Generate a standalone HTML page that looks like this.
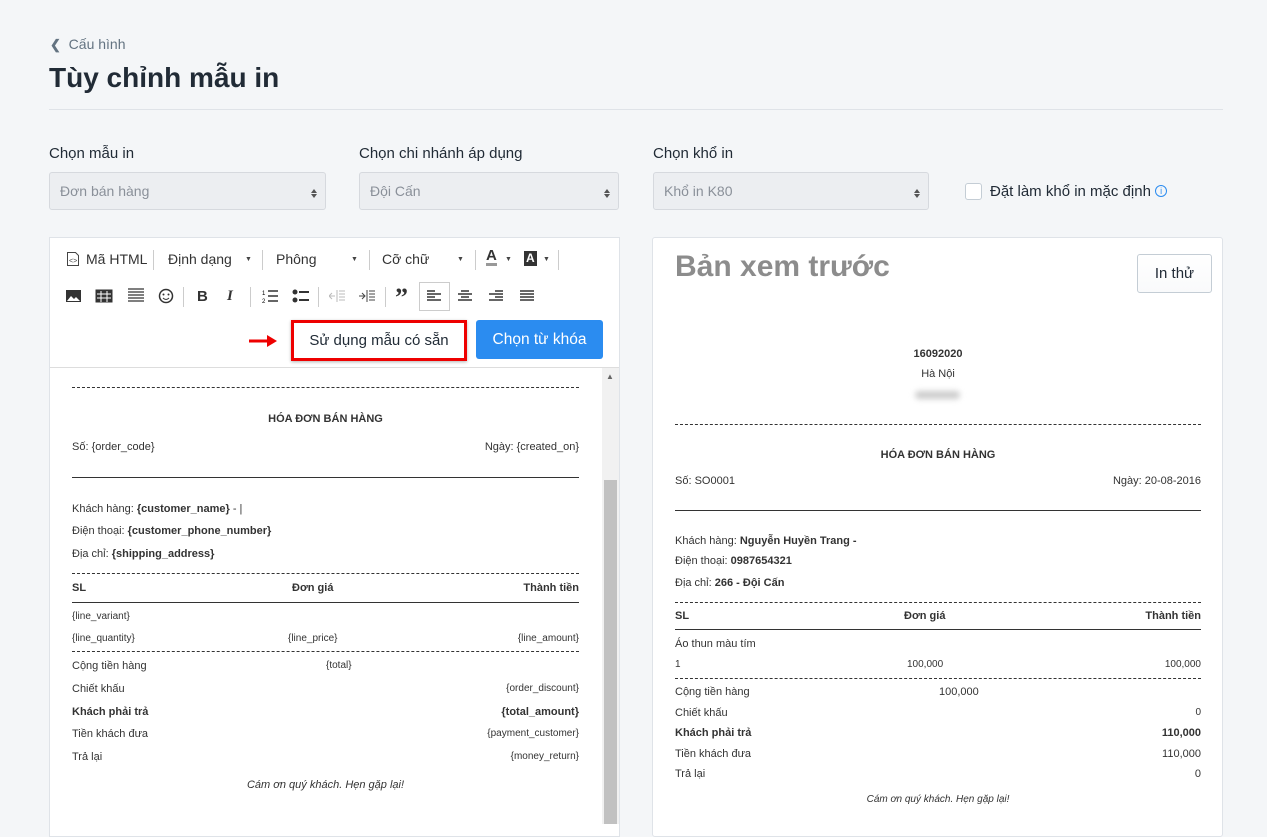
<!DOCTYPE html>
<html><head><meta charset="utf-8"><style>
*{box-sizing:border-box;margin:0;padding:0}
body{width:1267px;height:824px;overflow:hidden;background:#f4f6f8;font-family:"Liberation Sans",Arial,sans-serif;color:#212b36;position:relative}
.a{position:absolute;white-space:nowrap}
.lbl{font-size:15px;color:#212b36}
.sel{position:absolute;top:172px;height:38px;background:#eceef1;border:1px solid #d6d9de;border-radius:3px;font-size:14px;color:#8a9099;padding:10px 0 0 10px}
.sel:after{content:"";position:absolute;right:8px;top:13px;border:3.5px solid transparent;border-bottom:4px solid #555;}
.sel:before{content:"";position:absolute;right:8px;top:21px;border:3.5px solid transparent;border-top:4px solid #555;}
.panel{position:absolute;background:#fff;border:1px solid #dfe3e8}
.r{position:absolute;font-size:11px;color:#333;white-space:nowrap;line-height:14px;margin-top:1px}
.b{font-weight:bold}
.dash{position:absolute;height:0;border-top:1px dashed #333}
.sol{position:absolute;height:0;border-top:1px solid #333}
.tb{position:absolute;font-size:14px;color:#333}
.dd{position:absolute;top:256px;font-size:7px;color:#444}
.sep{position:absolute;width:1px;height:20px;background:#ccc}
.ic{position:absolute}
</style></head><body>
<div class="a" style="left:50px;top:36px;font-size:14px;color:#637381"><span style="font-size:13px;font-weight:bold">&#10094;</span>&nbsp; Cấu hình</div>
<div class="a" style="left:49px;top:62px;font-size:28px;font-weight:bold;color:#212b36">Tùy chỉnh mẫu in</div>
<div class="a" style="left:49px;top:109px;width:1174px;height:1px;background:#dfe3e8"></div>

<div class="a lbl" style="left:49px;top:145px">Chọn mẫu in</div>
<div class="a lbl" style="left:359px;top:145px">Chọn chi nhánh áp dụng</div>
<div class="a lbl" style="left:653px;top:145px">Chọn khổ in</div>
<div class="sel" style="left:49px;width:277px">Đơn bán hàng</div>
<div class="sel" style="left:359px;width:260px">Đội Cấn</div>
<div class="sel" style="left:653px;width:276px">Khổ in K80</div>
<div class="a" style="left:965px;top:183px;width:17px;height:17px;border:1px solid #c4cdd5;border-radius:3px;background:#fff"></div>
<div class="a" style="left:990px;top:183px;font-size:15px">Đặt làm khổ in mặc định <span style="display:inline-block;width:12px;height:12px;border:1px solid #2b8cf0;border-radius:50%;color:#2b8cf0;font-size:9px;text-align:center;line-height:10px;vertical-align:2px">i</span></div>

<!-- left panel -->
<div class="panel" style="left:49px;top:237px;width:571px;height:600px"></div>
<div class="a" style="left:50px;top:367px;width:569px;height:1px;background:#ddd"></div>
<svg class="ic" style="left:66px;top:251px" width="14" height="16"><path d="M1.5 1.5h8l3 3v10h-11z" fill="none" stroke="#444"/><text x="3" y="12" font-size="7" fill="#444">&lt;&gt;</text></svg>
<div class="tb" style="left:86px;top:251px">Mã HTML</div>
<div class="sep" style="left:153px;top:250px"></div>
<div class="tb" style="left:168px;top:251px">Định dạng</div><div class="dd" style="left:245px">▼</div>
<div class="sep" style="left:262px;top:250px"></div>
<div class="tb" style="left:276px;top:251px">Phông</div><div class="dd" style="left:351px">▼</div>
<div class="sep" style="left:369px;top:250px"></div>
<div class="tb" style="left:382px;top:251px">Cỡ chữ</div><div class="dd" style="left:457px">▼</div>
<div class="sep" style="left:475px;top:250px"></div>
<div class="tb" style="left:486px;top:249px;font-weight:bold;font-size:15px;border-bottom:3px solid #999;line-height:14px">A</div><div class="dd" style="left:505px">▼</div>
<div class="tb" style="left:524px;top:251px;background:#333;color:#fff;font-weight:bold;font-size:12px;padding:0 2px;line-height:15px">A</div><div class="dd" style="left:543px">▼</div>
<div class="sep" style="left:558px;top:250px"></div>
<!-- row2 -->
<svg class="ic" style="left:65px;top:289px" width="17" height="14"><rect x="1" y="1" width="15" height="12" fill="#333"/><path d="M2 12l4-5 3 3 2-2 4 4z" fill="#fff"/></svg>
<svg class="ic" style="left:95px;top:289px" width="18" height="14"><rect x="0.5" y="0.5" width="17" height="13" fill="#333"/><path d="M2 5h14M2 9h14M6 2v11M12 2v11" stroke="#fff"/></svg>
<svg class="ic" style="left:127px;top:287px" width="18" height="18"><path d="M1 2h16M1 5h16M1 8h16M1 11h16M1 14h16" stroke="#555" stroke-width="1.5"/></svg>
<svg class="ic" style="left:158px;top:288px" width="16" height="16"><circle cx="8" cy="8" r="6.5" fill="none" stroke="#333" stroke-width="1.5"/><circle cx="5.5" cy="6.5" r="1" fill="#333"/><circle cx="10.5" cy="6.5" r="1" fill="#333"/><path d="M5 10q3 3 6 0" fill="none" stroke="#333"/></svg>
<div class="sep" style="left:183px;top:287px"></div>
<div class="tb" style="left:197px;top:288px;font-weight:bold;font-size:15px">B</div>
<div class="tb" style="left:227px;top:288px;font-weight:bold;font-style:italic;font-size:15px;font-family:'Liberation Serif',serif">I</div>
<div class="sep" style="left:250px;top:287px"></div>
<svg class="ic" style="left:262px;top:289px" width="16" height="14"><path d="M6 2h10M6 7h10M6 12h10" stroke="#333" stroke-width="1.5"/><text x="0" y="6" font-size="6">1</text><text x="0" y="14" font-size="6">2</text></svg>
<svg class="ic" style="left:292px;top:289px" width="17" height="14"><circle cx="3" cy="3" r="2.5" fill="#333"/><circle cx="3" cy="11" r="2.5" fill="#333"/><path d="M7 3h10M7 11h10" stroke="#333" stroke-width="2"/></svg>
<div class="sep" style="left:318px;top:287px"></div>
<svg class="ic" style="left:329px;top:289px" width="16" height="14"><path d="M8 1v12M10 2h6M10 5h6M10 8h6M10 11h6M0 7h6M3 4L0 7l3 3" stroke="#bbb" fill="none"/></svg>
<svg class="ic" style="left:359px;top:289px" width="16" height="14"><path d="M8 1v12M10 2h6M10 5h6M10 8h6M10 11h6M0 7h6M3 4l3 3-3 3" stroke="#444" fill="none"/></svg>
<div class="sep" style="left:385px;top:287px"></div>
<div class="tb" style="left:395px;top:283px;font-weight:bold;font-size:26px;font-family:'Liberation Serif',serif;line-height:30px">”</div>
<div class="a" style="left:419px;top:282px;width:31px;height:29px;border:1px solid #ccc"></div>
<svg class="ic" style="left:427px;top:289px" width="14" height="14"><path d="M0 2h8M0 5h14M0 8h8M0 11h14" stroke="#333" stroke-width="1.5"/></svg>
<svg class="ic" style="left:458px;top:289px" width="14" height="14"><path d="M3 2h8M0 5h14M3 8h8M0 11h14" stroke="#333" stroke-width="1.5"/></svg>
<svg class="ic" style="left:489px;top:289px" width="14" height="14"><path d="M6 2h8M0 5h14M6 8h8M0 11h14" stroke="#333" stroke-width="1.5"/></svg>
<svg class="ic" style="left:520px;top:289px" width="14" height="14"><path d="M0 2h14M0 5h14M0 8h14M0 11h14" stroke="#333" stroke-width="1.5"/></svg>
<!-- buttons -->
<svg class="ic" style="left:248px;top:334px" width="32" height="14"><path d="M1 7h20" stroke="#e00" stroke-width="3"/><path d="M19 1l10 6-10 6z" fill="#e00"/></svg>
<div class="a" style="left:291px;top:320px;width:176px;height:41px;border:3px solid #e00;background:#fff;box-shadow:0 1px 3px rgba(0,0,0,.3);font-size:15px;color:#212b36;text-align:center;line-height:35px">Sử dụng mẫu có sẵn</div>
<div class="a" style="left:476px;top:320px;width:127px;height:39px;background:#2b8cf0;border-radius:3px;color:#fff;font-size:15.5px;text-align:center;line-height:39px">Chọn từ khóa</div>
<!-- scrollbar -->
<div class="a" style="left:602px;top:368px;width:17px;height:456px;background:#f1f1f1"></div>
<div class="a" style="left:604px;top:480px;width:13px;height:344px;background:#c1c1c1"></div>
<div class="a" style="left:606px;top:372px;font-size:8px;color:#666">▲</div>

<!-- left receipt -->
<div class="dash" style="left:72px;top:387px;width:507px"></div>
<div class="r b" style="left:72px;width:507px;text-align:center;top:411px">HÓA ĐƠN BÁN HÀNG</div>
<div class="r" style="left:72px;top:439px">Số: {order_code}</div><div class="r" style="right:688px;top:439px">Ngày: {created_on}</div>
<div class="sol" style="left:72px;top:477px;width:507px"></div>
<div class="r" style="left:72px;top:501px">Khách hàng: <b>{customer_name}</b> - |</div>
<div class="r" style="left:72px;top:523px">Điện thoại: <b>{customer_phone_number}</b></div>
<div class="r" style="left:72px;top:546px">Địa chỉ: <b>{shipping_address}</b></div>
<div class="dash" style="left:72px;top:573px;width:507px"></div>
<div class="r b" style="left:72px;top:580px">SL</div><div class="r b" style="left:292px;top:580px">Đơn giá</div><div class="r b" style="right:688px;top:580px">Thành tiền</div>
<div class="sol" style="left:72px;top:602px;width:507px"></div>
<div class="r" style="left:72px;top:609px;font-size:10px">{line_variant}</div>
<div class="r" style="left:72px;top:631px;font-size:10px">{line_quantity}</div><div class="r" style="left:288px;top:631px;font-size:10px">{line_price}</div><div class="r" style="right:688px;top:631px;font-size:10px">{line_amount}</div>
<div class="dash" style="left:72px;top:651px;width:507px"></div>
<div class="r" style="left:72px;top:658px">Cộng tiền hàng</div><div class="r" style="left:326px;top:658px;font-size:10px">{total}</div>
<div class="r" style="left:72px;top:681px">Chiết khấu</div><div class="r" style="right:688px;top:681px;font-size:10px">{order_discount}</div>
<div class="r b" style="left:72px;top:704px">Khách phải trả</div><div class="r b" style="right:688px;top:704px">{total_amount}</div>
<div class="r" style="left:72px;top:726px">Tiền khách đưa</div><div class="r" style="right:688px;top:726px;font-size:10px">{payment_customer}</div>
<div class="r" style="left:72px;top:749px">Trả lại</div><div class="r" style="right:688px;top:749px;font-size:10px">{money_return}</div>
<div class="r" style="left:72px;width:507px;text-align:center;top:777px;font-style:italic">Cám ơn quý khách. Hẹn gặp lại!</div>

<!-- right panel -->
<div class="panel" style="left:652px;top:237px;width:571px;height:600px;border-radius:3px"></div>
<div class="a" style="left:675px;top:250px;font-size:30px;font-weight:bold;color:#8c8c8c">Bản xem trước</div>
<div class="a" style="left:1137px;top:254px;width:75px;height:39px;border:1px solid #c4cdd5;border-radius:3px;background:linear-gradient(#fff,#f9fafb);font-size:15px;text-align:center;line-height:37px">In thử</div>
<div class="r b" style="left:675px;width:526px;text-align:center;top:346px">16092020</div>
<div class="r" style="left:675px;width:526px;text-align:center;top:366px">Hà Nội</div>
<div class="a" style="left:915px;top:391px;width:45px;height:8px;background:#ccc;border-radius:4px;filter:blur(3px)"></div>
<div class="dash" style="left:675px;top:424px;width:526px"></div>
<div class="r b" style="left:675px;width:526px;text-align:center;top:447px">HÓA ĐƠN BÁN HÀNG</div>
<div class="r" style="left:675px;top:473px">Số: SO0001</div><div class="r" style="right:66px;top:473px">Ngày: 20-08-2016</div>
<div class="sol" style="left:675px;top:510px;width:526px"></div>
<div class="r" style="left:675px;top:533px">Khách hàng: <b>Nguyễn Huyền Trang -</b></div>
<div class="r" style="left:675px;top:553px">Điện thoại: <b>0987654321</b></div>
<div class="r" style="left:675px;top:575px">Địa chỉ: <b>266 - Đội Cấn</b></div>
<div class="dash" style="left:675px;top:602px;width:526px"></div>
<div class="r b" style="left:675px;top:608px">SL</div><div class="r b" style="left:904px;top:608px">Đơn giá</div><div class="r b" style="right:66px;top:608px">Thành tiền</div>
<div class="sol" style="left:675px;top:629px;width:526px"></div>
<div class="r" style="left:675px;top:636px">Áo thun màu tím</div>
<div class="r" style="left:675px;top:657px;font-size:10px">1</div><div class="r" style="left:907px;top:657px;font-size:10px">100,000</div><div class="r" style="right:66px;top:657px;font-size:10px">100,000</div>
<div class="dash" style="left:675px;top:678px;width:526px"></div>
<div class="r" style="left:675px;top:684px">Cộng tiền hàng</div><div class="r" style="left:939px;top:684px">100,000</div>
<div class="r" style="left:675px;top:705px">Chiết khấu</div><div class="r" style="right:66px;top:705px;font-size:10px">0</div>
<div class="r b" style="left:675px;top:725px">Khách phải trả</div><div class="r b" style="right:66px;top:725px">110,000</div>
<div class="r" style="left:675px;top:746px">Tiền khách đưa</div><div class="r" style="right:66px;top:746px">110,000</div>
<div class="r" style="left:675px;top:766px">Trả lại</div><div class="r" style="right:66px;top:766px">0</div>
<div class="r" style="left:675px;width:526px;text-align:center;top:792px;font-style:italic;font-size:10px">Cám ơn quý khách. Hẹn gặp lại!</div>
</body></html>
